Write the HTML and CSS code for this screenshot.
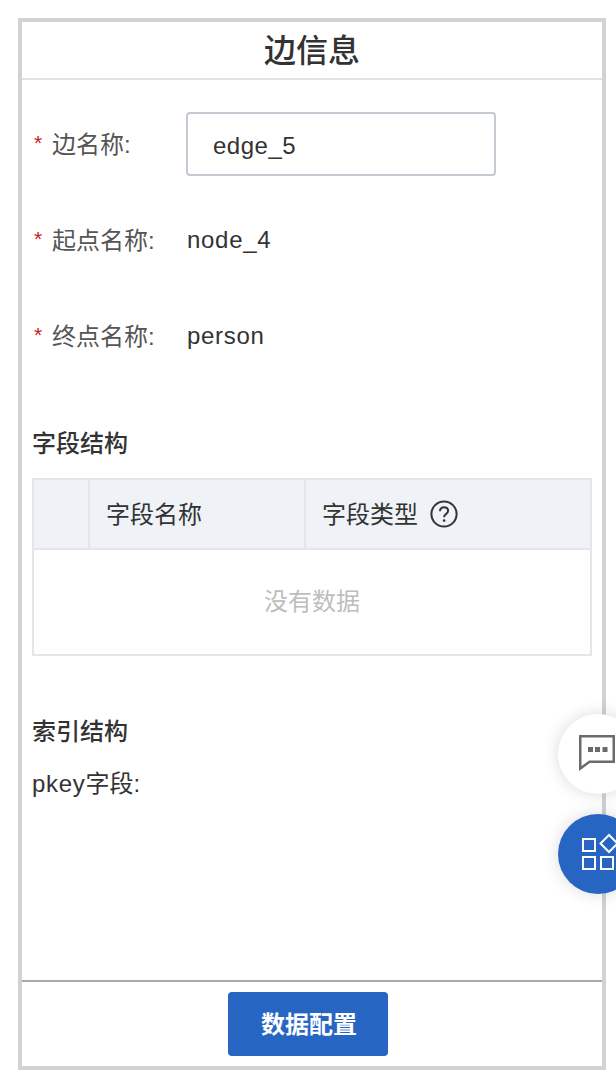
FILE: index.html
```html
<!DOCTYPE html>
<html lang="zh-CN">
<head>
    <meta charset="UTF-8">
    <meta name="viewport" content="width=device-width, initial-scale=1.0">
    <title>边信息</title>
    <link rel="stylesheet" href="styles.css">
</head>
<body>
    <div class="panel">
        <div class="panel-title">边信息</div>

        <div class="panel-body">
            <div class="form-row">
                <label class="form-label"><span class="required">*</span>边名称:</label>
                <input class="form-input" type="text" value="edge_5">
            </div>
            <div class="form-row">
                <label class="form-label"><span class="required">*</span>起点名称:</label>
                <span class="form-value">node_4</span>
            </div>
            <div class="form-row">
                <label class="form-label"><span class="required">*</span>终点名称:</label>
                <span class="form-value">person</span>
            </div>

            <h3 class="section-title field-title">字段结构</h3>
            <div class="table">
                <div class="table-head">
                    <div class="head-cell cell-check"></div>
                    <div class="head-cell cell-name">字段名称</div>
                    <div class="head-cell cell-type">
                        字段类型
                        <svg class="help-icon" viewBox="0 0 28 28" width="28" height="28">
                            <circle cx="14" cy="14" r="12.6" fill="none" stroke="#333" stroke-width="2"/>
                            <path d="M10 11.2c0-2.4 1.8-4 4.1-4 2.3 0 4 1.5 4 3.6 0 1.6-.9 2.5-2.1 3.3-1.2.8-1.9 1.500-1.900 3.100" fill="none" stroke="#333" stroke-width="2"/>
                            <circle cx="14.100" cy="20.600" r="1.300" fill="#333"/>
                        </svg>
                    </div>
                </div>
                <div class="table-empty">没有数据</div>
            </div>

            <h3 class="section-title index-title">索引结构</h3>
            <div class="pkey-row"><span class="pkey-name">pkey</span>字段:</div>
        </div>

        <div class="panel-footer">
            <button class="primary-btn">数据配置</button>
        </div>
    </div>

    <!-- 悬浮按钮 -->
    <div class="float-btn float-chat">
        <svg viewBox="0 0 38 38" width="38" height="38">
            <path d="M1.250 1.250H34.750V26.750H10.500L1.250 33.500z" fill="none" stroke="#6b6b6b" stroke-width="2.500"/>
            <rect x="9" y="12" width="5" height="5" fill="#6b6b6b"/>
            <rect x="16" y="12" width="5" height="5" fill="#6b6b6b"/>
            <rect x="23.500" y="12" width="5" height="5" fill="#6b6b6b"/>
        </svg>
    </div>
    <div class="float-btn float-apps">
        <svg class="apps-icon" viewBox="0 0 36 38" width="36" height="38">
            <rect x="1" y="4" width="12" height="12" fill="none" stroke="#fff" stroke-width="2"/>
            <rect x="1" y="22" width="12" height="12" fill="none" stroke="#fff" stroke-width="2"/>
            <rect x="19" y="22" width="12" height="12" fill="none" stroke="#fff" stroke-width="2"/>
            <path d="M27 0 35.500 8.500 27 17 18.500 8.500z" fill="none" stroke="#fff" stroke-width="2"/>
        </svg>
    </div>
</body>
</html>
```

FILE: styles.css
```css
* {
    margin: 0;
    padding: 0;
    box-sizing: border-box;
}

html, body {
    height: 100%;
    overflow: hidden;
}

body {
    font-family: "Liberation Sans", "Noto Sans CJK SC", sans-serif;
    background: white;
    color: #333;
    padding: 18px 10px 12px 18px;
}

.panel {
    width: 588px;
    height: 1052px;
    border: 4px solid #d2d2d2;
    background: white;
    display: flex;
    flex-direction: column;
}

.panel-title {
    height: 58px;
    border-bottom: 2px solid #e2e2e2;
    text-align: center;
    font-size: 32px;
    font-weight: 500;
    line-height: 58px;
    color: #333;
}

.panel-body {
    flex: 1;
    padding: 32px 10px 0;
}

.form-row {
    display: flex;
    align-items: center;
    height: 64px;
    margin-bottom: 32px;
}

.form-label {
    width: 154px;
    flex-shrink: 0;
    margin-bottom: 4px;
    font-size: 24px;
    color: #555;
}

.required {
    display: inline-block;
    width: 20px;
    padding-left: 2px;
    font-size: 21px;
    line-height: 16px;
    vertical-align: 3px;
    color: #c9201c;
}

.form-input {
    width: 310px;
    height: 64px;
    border: 2px solid #c3cad2;
    border-radius: 4px;
    padding: 4px 25px 0;
    font-family: inherit;
    font-size: 24px;
    letter-spacing: 0.5px;
    color: #333;
}

.form-value {
    padding-left: 1px;
    font-size: 24px;
    letter-spacing: 0.7px;
    color: #333;
}

.section-title {
    font-size: 24px;
    font-weight: 500;
    line-height: 32px;
    color: #333;
}

.field-title {
    margin-top: 60px;
}

.table {
    margin-top: 18px;
    width: 560px;
    border: 2px solid #e4e6e9;
}

.table-head {
    display: flex;
    height: 70px;
    background: #eff2f7;
    border-bottom: 2px solid #e4e6e9;
}

.head-cell {
    display: flex;
    align-items: center;
    padding-bottom: 4px;
    font-size: 24px;
    color: #333;
    border-right: 2px solid #e4e6e9;
}

.cell-check {
    width: 56px;
}

.cell-name {
    width: 216px;
    padding-left: 16px;
}

.cell-type {
    flex: 1;
    padding-left: 16px;
    border-right: none;
}

.help-icon {
    margin-left: 12px;
    margin-top: 4px;
}

.table-empty {
    height: 104px;
    text-align: center;
    line-height: 104px;
    font-size: 24px;
    color: #bdbdbd;
}

.index-title {
    margin-top: 60px;
}

.pkey-row {
    margin-top: 20px;
    font-size: 24px;
    line-height: 32px;
    color: #333;
}

.pkey-name {
    letter-spacing: 0.7px;
}

.panel-footer {
    height: 86px;
    border-top: 2px solid #aaa;
    padding-top: 10px;
    display: flex;
    justify-content: center;
}

.primary-btn {
    width: 160px;
    height: 64px;
    margin-right: 8px;
    padding: 0 0 4px 2px;
    border: none;
    border-radius: 4px;
    background: #2765c3;
    color: white;
    font-family: inherit;
    font-size: 24px;
    font-weight: 700;
}

.float-btn {
    position: absolute;
    left: 558px;
    width: 80px;
    height: 80px;
    border-radius: 50%;
    display: flex;
    align-items: center;
    box-shadow: 0 0 16px rgba(0,0,0,0.15);
}

.float-chat {
    top: 714px;
    background: white;
    padding-left: 21px;
}

.float-apps {
    top: 814px;
    background: #2765c3;
    padding-left: 24px;
}

.apps-icon {
    overflow: visible;
}
```
